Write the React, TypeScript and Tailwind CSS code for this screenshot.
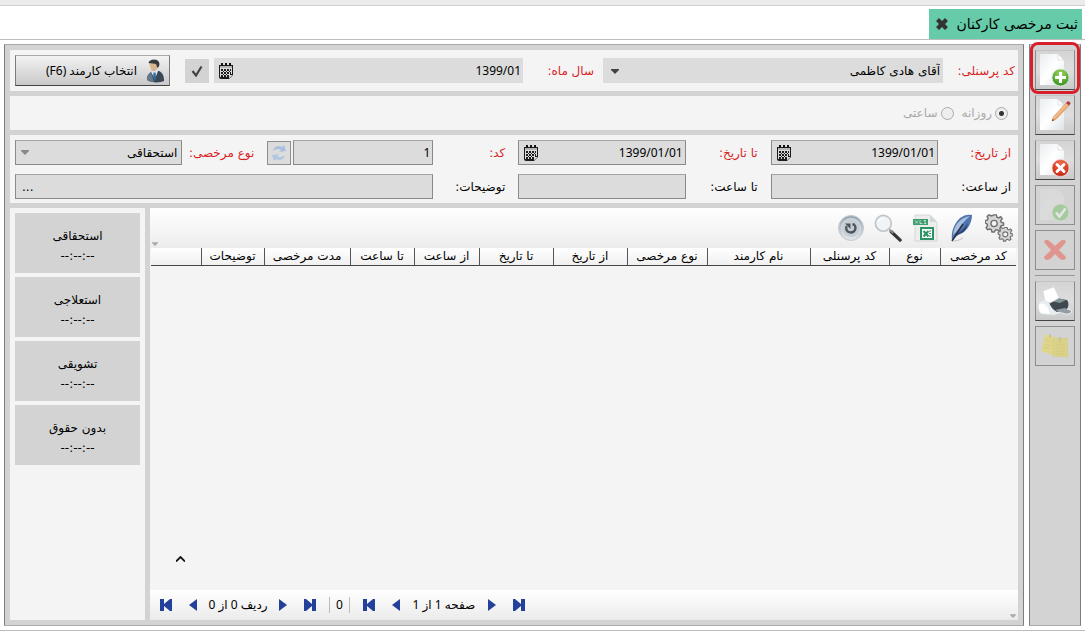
import React from "react";

type IconProps = { className?: string };

function Caret({ className = "" }: IconProps) {
  return (
    <svg viewBox="0 0 8 5" className={className} aria-hidden="true">
      <path d="M0 0h8v1L4 5 0 1z" fill="currentColor" />
    </svg>
  );
}

function CalendarIcon() {
  return (
    <svg viewBox="0 0 16 16" className="size-4 shrink-0" aria-hidden="true">
      <path d="M1 2h14v10l-4 4H3a2 2 0 0 1-2-2z" fill="#1c1c1c" />
      <path d="M2 3h12v2H2z" fill="#b4b4b4" />
      <g fill="#111">
        <path d="M3 0h2v3H3zM7 0h2v3H7zM11 0h2v3h-2z" />
      </g>
      <g fill="#dcdcdc">
        <path d="M2 5h12v1H2zM2 5h1v9H2zM5 6v8h1V6zM8 6v8h1V6zM11 6v5h1V6zM13 5h1v6h-1zM3 8h10v1H3zM3 11h9v1H3z" />
        <path d="M11 15.500V12h3.500z" />
      </g>
    </svg>
  );
}

function PageShape() {
  return (
    <>
      <defs>
        <linearGradient id="page" x1="0" y1="0" x2="1" y2="1">
          <stop offset="0" stopColor="#e9eef0" />
          <stop offset="0.5" stopColor="#fff" />
          <stop offset="1" stopColor="#dde3e7" />
        </linearGradient>
      </defs>
      <path d="M4 3h18l6 6v25H4z" fill="url(#page)" />
      <path d="M22 3l6 6h-6z" fill="#fff" stroke="#c9ced1" strokeWidth="0.6" />
    </>
  );
}

function NewIcon() {
  return (
    <svg viewBox="0 0 38 38" className="size-full" aria-hidden="true">
      <defs>
        <radialGradient id="green" cx="0.5" cy="0.25" r="0.8">
          <stop offset="0" stopColor="#9bd65c" />
          <stop offset="1" stopColor="#2f8d1d" />
        </radialGradient>
      </defs>
      <PageShape />
      <circle cx="24.500" cy="26.500" r="8.500" fill="url(#green)" stroke="#e4f2dc" strokeWidth="0.7" />
      <path d="M23 21h3v4h4v3h-4v4h-3v-4h-4v-3h4z" fill="#fff" />
    </svg>
  );
}

function EditIcon() {
  return (
    <svg viewBox="0 0 38 38" className="size-full" aria-hidden="true">
      <PageShape />
      <path d="M16 25l1.300-4L30 7l3 2.500L20 23.500z" fill="#efaa72" stroke="#c98e62" strokeWidth="0.5" />
      <path d="M18 22L31 8" stroke="#f9d0a5" strokeWidth="1" />
      <path d="M30 7l1.500-1.600c1-.8 3.600 1.200 2.900 2.300L33 9.500z" fill="#b8343c" />
      <path d="M16 25l.7-2 1.300 1.200z" fill="#333" />
    </svg>
  );
}

function DeletePageIcon() {
  return (
    <svg viewBox="0 0 38 38" className="size-full" aria-hidden="true">
      <defs>
        <radialGradient id="red" cx="0.5" cy="0.2" r="0.9">
          <stop offset="0" stopColor="#ef6a4a" />
          <stop offset="1" stopColor="#c41c0d" />
        </radialGradient>
      </defs>
      <PageShape />
      <circle cx="24.500" cy="27" r="8.500" fill="url(#red)" stroke="#f2dcd8" strokeWidth="0.7" />
      <path d="M21 23.500l7 7m0-7l-7 7" stroke="#fff" strokeWidth="3" strokeLinecap="round" />
    </svg>
  );
}

function ConfirmIcon() {
  return (
    <svg viewBox="0 0 38 38" className="size-full opacity-45" aria-hidden="true">
      <g opacity="0.45">
        <PageShape />
      </g>
      <circle cx="24.500" cy="26.500" r="8.500" fill="#6fc05c" stroke="#e4f2dc" strokeWidth="0.7" />
      <path d="M20 26.500l3.500 4 6-8" stroke="#fff" strokeWidth="2.600" fill="none" />
    </svg>
  );
}

function CrossIcon() {
  return (
    <svg viewBox="0 0 38 38" className="size-full" aria-hidden="true">
      <path
        d="M8 11q1-3 4-2 3 2 7 6 4-4 7-6 3-1 4 2-3 4-7 8 4 4 7 7 0 3-4 3-4-2-7-6-3 4-7 6-4 0-4-3 3-3 7-7-4-4-7-8z"
        fill="#df958d"
      />
    </svg>
  );
}

function PrinterIcon() {
  return (
    <svg viewBox="0 0 38 38" className="size-full" aria-hidden="true">
      <path d="M3 21q5-4 12-3l14-1 3 11-14 5-13-1q-4-5-2-11z" fill="#e8edf0" />
      <path d="M13 20l7-4 11 2q3 4 0 9l-10 3q-6-3-8-10z" fill="#3f4a50" />
      <path d="M15 19l6-3 9 2-6 3z" fill="#84929a" />
      <path d="M7 9l11-4 5 11-9 5-5-2z" fill="#fff" stroke="#d9dcde" strokeWidth="0.6" />
      <path d="M3 22q8-3 11 10l-9-1q-3-4-2-9z" fill="#fff" />
      <path d="M19 28l10-2 6 3q0 3-5 3z" fill="#929da4" />
      <path d="M26 31q8 3 10-2-1-2-5-2" stroke="#e9edef" fill="none" />
    </svg>
  );
}

function NotesIcon() {
  return (
    <svg viewBox="0 0 38 38" className="size-full opacity-75" aria-hidden="true">
      <path d="M9 7l12 4-4 17-12-4z" fill="#e3d873" />
      <path d="M17 12l14-1 1 19-15-1z" fill="#e0d26d" stroke="#d2c66d" strokeWidth="0.6" />
      <path d="M9 13l7 2m-8 2l7 2m-8 1l7 2M20 18h9m-9 3h9m-9 3h9m-9 3h9" stroke="#cfc46c" strokeWidth="0.8" />
      <path d="M14 7v4m10-1v5" stroke="#b5b69a" strokeWidth="1.300" />
    </svg>
  );
}

function RefreshIcon() {
  return (
    <svg viewBox="0 0 20 20" className="size-5" aria-hidden="true">
      <path d="M4 8c1-5 6-6 9-4l2-2 2 6-7 1 2-2C9 5 7 6 4 8z" fill="#a9bfdf" />
      <path d="M16 12c-1 5-6 6-9 4l-2 2-2-6 7-1-2 2c3 2 5 1 8-1z" fill="#b2c6e3" />
    </svg>
  );
}

function PersonIcon() {
  return (
    <svg viewBox="0 0 20 24" className="h-6 w-5 shrink-0" aria-hidden="true">
      <path d="M2 21c0-5 2-7 6-9l6 0c4 2 5 5 5 10-4 2-13 2-17-1z" fill="#3a4855" />
      <path d="M6 13l4 7 3-8-3-2z" fill="#dfe8ee" />
      <path d="M8.500 13.500h2l.6 5-1.200 3-1.600-3z" fill="#2c6da5" />
      <path d="M2 21c0-4 1-6 4-8l3 10c-3 0-5-1-7-2z" fill="#64798a" />
      <path d="M4 4c1-3 8-3 9 1l-1 5c-2 3-5 3-6 0z" fill="#d9b48e" />
      <path d="M3.500 4C4 0 12-1 14 3c1 3 0 5-1.500 6L11 5C9 5 7 4 3.500 4z" fill="#35393c" />
    </svg>
  );
}

function RestoreIcon() {
  return (
    <svg viewBox="0 0 28 28" className="size-7" aria-hidden="true">
      <defs>
        <linearGradient id="disc" x1="0" y1="0" x2="0" y2="1">
          <stop offset="0" stopColor="#96a3ae" />
          <stop offset="1" stopColor="#e2e7ea" />
        </linearGradient>
      </defs>
      <circle cx="14" cy="14" r="12.500" fill="url(#disc)" stroke="#c3cbd1" />
      <circle cx="14" cy="14" r="9.500" fill="#c6ced5" stroke="#dfe4e8" strokeWidth="0.8" />
      <path d="M15.500 10.500h1.500c3 3 1 8-3 8s-5.500-3-4.500-6.500" stroke="#4d5559" strokeWidth="2.300" fill="none" />
      <path d="M8 9.500h5.500V15z" fill="#4d5559" />
    </svg>
  );
}

function SearchIcon() {
  return (
    <svg viewBox="0 0 30 30" className="size-7" aria-hidden="true">
      <path d="M18.500 19L28 28" stroke="#33373a" strokeWidth="3.500" strokeLinecap="round" />
      <path d="M16.500 16.500l4 4" stroke="#8b9195" strokeWidth="2" />
      <circle cx="10" cy="10" r="8.500" fill="#f0f4f7" stroke="#bfc4c8" strokeWidth="1.800" />
      <path d="M4 10c0-4 3-6 7-6-3 1-5 3-7 6z" fill="#fff" />
    </svg>
  );
}

function ExcelIcon() {
  return (
    <svg viewBox="0 0 28 28" className="size-7" aria-hidden="true">
      <path d="M4 1h15l7 7v19H4z" fill="#eceeee" stroke="#c9cccc" strokeWidth="0.7" />
      <path d="M19 1v7h7z" fill="#d3d7d7" />
      <path d="M2 5h15v6H2z" fill="#3f9b70" />
      <path d="M4 6.500l3 3m0-3l-3 3M9 6v3.500h2.500M15 6.500h-2l2 3h-2" stroke="#d4eadf" strokeWidth="0.8" fill="none" />
      <path d="M9 13h14v13H9z" fill="#2c9464" />
      <path d="M11 15h10v9H11z" fill="#fff" />
      <path d="M12.500 17l5 5.500m0-5.500l-5 5.500" stroke="#2c9464" strokeWidth="2.200" />
      <path d="M18 17h2M18 19.500h2M18 22h2" stroke="#2c9464" />
    </svg>
  );
}

function QuillIcon() {
  return (
    <svg viewBox="0 0 28 28" className="size-7" aria-hidden="true">
      <path d="M4 26C3 17 6 10 12 4c4-3 8-4 12-3 0 6-3 13-8 17-4 2-7 3-11 8z" fill="#4f74ae" />
      <path d="M5 21C6 12 11 4 22 2c-5 4-9 9-12 14z" fill="#a9bfdd" />
      <path d="M8 19c3 1 8-4 12-10-1 5-3 8-6 10-2 1-4 1-7 3z" fill="#2b4676" />
      <path d="M4 27L15 10" stroke="#2b3342" strokeWidth="1.500" />
      <path d="M5 27c4 0 7-1 10-3" stroke="#c4c4c4" fill="none" />
    </svg>
  );
}

function Gear({ x, y, s }: { x: number; y: number; s: number }) {
  return (
    <g transform={`translate(${x} ${y}) scale(${s})`}>
      <path
        d="M-1.500-9h3l.7 2.600 1.800.8L6.300-7 8-4.800 6.300-2.600l.6 1.800L9.500 0v2.500l-2.800.7-.9 1.700 1 2.400-2.200 1.600-2.200-1.500-1.800.3L-.8 10h-2.600l-.6-2.400-1.700-1-2.600.8-1.500-2.200 1.500-2.200-.4-1.700L-11 0v-2.500l2.500-.8.8-1.700-1-2.400 2-1.700 2.400 1.300 1.500-.5z"
        fill="#d5d5d5"
        stroke="#707070"
        strokeWidth="1.600"
      />
      <circle cx="-1" cy="0.500" r="3.500" fill="#f3f3f3" stroke="#707070" strokeWidth="1.500" />
    </g>
  );
}

function GearsIcon() {
  return (
    <svg viewBox="0 0 28 28" className="size-7" aria-hidden="true">
      <Gear x={10} y={9} s={0.9} />
      <Gear x={21} y={20} s={0.72} />
    </svg>
  );
}

function ToolButton({ label, disabled = false, children }: { label: string; disabled?: boolean; children: React.ReactNode }) {
  return (
    <button
      type="button"
      aria-label={label}
      disabled={disabled}
      className={
        disabled
          ? "size-10 border border-[#8e8e8e] bg-[#d3d3d3]"
          : "size-10 border border-t-[#c2c2c2] border-x-[#8a8a8a] border-b-[#444] bg-linear-to-b from-[#d4d4d4] via-[#dedede] to-[#cacaca]"
      }
    >
      {children}
    </button>
  );
}

function Label({ htmlFor, required = false, className = "", children }: { htmlFor: string; required?: boolean; className?: string; children: React.ReactNode }) {
  return (
    <label htmlFor={htmlFor} className={`whitespace-nowrap ${required ? "text-[#d81e1e]" : "text-black"} ${className}`}>
      {children}
    </label>
  );
}

const latin = "font-['Noto_Sans','DejaVu_Sans',sans-serif]";
const box = "flex h-[25px] min-w-0 items-center bg-[#dcdcdc]";
const framed = "border border-t-[#a5a5a5] border-[#8a8a8a]";
const field = `h-full w-full min-w-0 bg-transparent px-[2px] text-xs outline-none ${latin}`;

function TextField({ id, value = "", calendar = false, flat = false, className = "" }: { id: string; value?: string; calendar?: boolean; flat?: boolean; className?: string }) {
  return (
    <div className={`${box} ${flat ? "" : framed} ${className}`}>
      <input id={id} defaultValue={value} readOnly className={field} />
      {calendar && (
        <button type="button" aria-label="تقویم" className="me-1 shrink-0">
          <CalendarIcon />
        </button>
      )}
    </div>
  );
}

function Arrow({ dir, bar = false, label }: { dir: "left" | "right"; bar?: boolean; label: string }) {
  return (
    <button type="button" aria-label={label} className="shrink-0 text-[#23409a]">
      <svg viewBox={bar ? "0 0 12 12" : "0 0 8 12"} className={bar ? "h-3 w-3" : "h-3 w-2"} aria-hidden="true">
        {bar ? (
          <path d={dir === "left" ? "M0 0h4v5l6-5h2v12h-2L4 7v5H0z" : "M12 0H8v5L2 0H0v12h2l6-5v5h4z"} fill="currentColor" />
        ) : (
          <path d={dir === "left" ? "M8 0v12L0 6z" : "M0 0v12l8-6z"} fill="currentColor" />
        )}
      </svg>
    </button>
  );
}

const columns = [
  { title: "کد مرخصی", width: "w-[76px]" },
  { title: "نوع", width: "w-[51px]" },
  { title: "کد پرسنلی", width: "w-[79px]" },
  { title: "نام کارمند", width: "w-[103px]" },
  { title: "نوع مرخصی", width: "w-[80px]" },
  { title: "از تاریخ", width: "w-[74px]" },
  { title: "تا تاریخ", width: "w-[74px]" },
  { title: "از ساعت", width: "w-[65px]" },
  { title: "تا ساعت", width: "w-[64px]" },
  { title: "مدت مرخصی", width: "w-[86px]" },
  { title: "توضیحات", width: "w-[63px]" },
  { title: "", width: "w-[50px]" },
];

const balances = ["استحقاقی", "استعلاجی", "تشویقی", "بدون حقوق"];

const gridTools = [
  { label: "تنظیمات", icon: <GearsIcon /> },
  { label: "ویرایش", icon: <QuillIcon /> },
  { label: "خروجی اکسل", icon: <ExcelIcon /> },
  { label: "جستجو", icon: <SearchIcon /> },
  { label: "بازنشانی", icon: <RestoreIcon /> },
];

export default function App() {
  return (
    <div dir="rtl" className="flex min-h-screen flex-col border-b border-[#bcbcbc] bg-white font-['DejaVu_Sans',sans-serif] text-xs text-black">
      <div className="h-[6px] border-b border-[#cfcfcf] bg-[#ebebeb]" />
      <header className="flex h-[34px] items-end border-b border-[#bcbcbc] ps-[3px]">
        <div className="flex h-[30px] items-center gap-2 bg-[#66cba8] ps-1 pe-[7px]">
          <h1 className="text-sm whitespace-nowrap">ثبت مرخصی کارکنان</h1>
          <button type="button" aria-label="بستن">
            <svg viewBox="0 0 12 12" className="size-3" aria-hidden="true">
              <path d="M0 3l3-3 3 3 3-3 3 3-3 3 3 3-3 3-3-3-3 3-3-3 3-3z" fill="#333" />
            </svg>
          </button>
        </div>
      </header>

      <div className="flex flex-1 gap-[5px] p-1">
        <aside className="relative flex w-[52px] shrink-0 flex-col items-center gap-[5px] border border-x-[#7d7d7d] border-y-[#aaa] bg-[#d3d3d3] pt-[5px]">
          <ToolButton label="جدید"><NewIcon /></ToolButton>
          <ToolButton label="ویرایش"><EditIcon /></ToolButton>
          <ToolButton label="حذف"><DeletePageIcon /></ToolButton>
          <ToolButton label="تایید" disabled><ConfirmIcon /></ToolButton>
          <ToolButton label="انصراف" disabled><CrossIcon /></ToolButton>
          <div className="w-10 border-t border-[#999]" />
          <ToolButton label="چاپ"><PrinterIcon /></ToolButton>
          <ToolButton label="یادداشت" disabled><NotesIcon /></ToolButton>
          <div className="pointer-events-none absolute inset-x-0 -top-[3px] h-[52px] rounded-lg border-3 border-[#d8202c]" />
        </aside>

        <main className="flex min-w-0 flex-1 flex-col gap-[5px] border border-x-[#7d7d7d] border-y-[#aaa] bg-[#d3d3d3] p-[5px]">
          <section className="grid h-[41px] shrink-0 grid-cols-[72px_11fr_80px_10fr_44px_155px] items-center bg-[#f4f4f4] ps-[3px] pe-[5px]">
            <Label htmlFor="employee" required>کد پرسنلی:</Label>
            <div className="relative h-[25px] min-w-0 bg-[#dcdcdc]">
              <select id="employee" className="h-full w-full appearance-none bg-transparent px-[3px] outline-none">
                <option>آقای هادی کاظمی</option>
              </select>
              <Caret className="pointer-events-none absolute end-2 top-[11px] h-[5px] w-2 text-[#444]" />
            </div>
            <Label htmlFor="month" required className="ps-[9px]">سال ماه:</Label>
            <TextField id="month" value="1399/01" calendar flat />
            <button type="button" aria-label="تایید ماه" className="ms-[5px] grid size-6 place-items-center bg-[#d3d3d3]">
              <svg viewBox="0 0 12 12" className="size-3" aria-hidden="true">
                <path d="M1.500 6L5 10.500 10.500 1.500" stroke="#444" strokeWidth="2.200" fill="none" />
              </svg>
            </button>
            <button type="button" className="flex h-[31px] items-center gap-2 border border-t-[#aaa] border-x-[#7a7a7a] border-b-[#444] bg-linear-to-b from-[#f3f3f3] to-[#c9c9c9] ps-1 whitespace-nowrap">
              <PersonIcon />
              <span className={latin}>انتخاب کارمند (F6)</span>
            </button>
          </section>

          <section className="flex h-[34px] shrink-0 items-center gap-1 bg-[#f4f4f4] ps-[10px] text-[#a9a9a9]">
            <label className="flex items-center gap-[3px]">
              <input type="radio" name="unit" disabled defaultChecked className="size-[13px] appearance-none rounded-full border border-[#aaa] bg-[radial-gradient(circle,#333_2px,#eee_3px)]" />
              روزانه
            </label>
            <label className="flex items-center gap-[3px]">
              <input type="radio" name="unit" disabled className="ms-1 size-[13px] appearance-none rounded-full border border-[#aaa] bg-[#eee]" />
              ساعتی
            </label>
          </section>

          <section className="grid h-[68px] shrink-0 grid-cols-[75px_1fr_85px_1fr_85px_2.5fr] content-start items-center gap-y-[9px] bg-[#f4f4f4] ps-[5px] pe-[5px] pt-[5px]">
            <Label htmlFor="from-date" required className="ps-[2px]">از تاریخ:</Label>
            <TextField id="from-date" value="1399/01/01" calendar />
            <Label htmlFor="to-date" required className="ps-[13px]">تا تاریخ:</Label>
            <TextField id="to-date" value="1399/01/01" calendar />
            <Label htmlFor="code" required className="ps-[13px]">کد:</Label>
            <div className="flex min-w-0 items-center">
              <TextField id="code" value="1" className="flex-1" />
              <button type="button" aria-label="بازخوانی" disabled className="ms-[2px] grid size-6 shrink-0 place-items-center border border-[#8e8e8e] bg-[#dcdcdc]">
                <RefreshIcon />
              </button>
              <Label htmlFor="kind" required className="w-[85px] shrink-0 ps-[13px]">نوع مرخصی:</Label>
              <div className={`relative h-[25px] w-2/5 shrink-0 bg-[#dcdcdc] ${framed}`}>
                <select id="kind" className="h-full w-full appearance-none bg-transparent px-1 outline-none">
                  <option>استحقاقی</option>
                </select>
                <Caret className="pointer-events-none absolute end-[5px] top-[9px] h-[5px] w-2 text-[#888]" />
              </div>
            </div>
            <Label htmlFor="from-time" className="ps-[2px]">از ساعت:</Label>
            <TextField id="from-time" />
            <Label htmlFor="to-time" className="ps-[13px]">تا ساعت:</Label>
            <TextField id="to-time" />
            <Label htmlFor="notes" className="ps-[13px]">توضیحات:</Label>
            <div className={`${box} ${framed}`}>
              <input id="notes" readOnly className={field} />
              <button type="button" aria-label="متن کامل" className="me-[6px]">...</button>
            </div>
          </section>

          <div className="flex min-h-0 flex-1 gap-[5px]">
            <section className="flex min-w-0 flex-1 flex-col bg-[#f4f4f4]">
              <div className="flex h-10 items-center gap-[9px] bg-linear-to-b from-white to-[#ececec] ps-[5px]">
                {gridTools.map((tool) => (
                  <button key={tool.label} type="button" aria-label={tool.label}>
                    {tool.icon}
                  </button>
                ))}
                <Caret className="ms-auto me-[2px] mb-[2px] h-1 w-[6px] self-end text-[#aaa]" />
              </div>
              <div className="px-[2px]">
                <table className="w-full table-fixed border-collapse">
                  <thead>
                    <tr className="border-b border-[#444] bg-linear-to-b from-white to-[#f0f0f0]">
                      {columns.map((column) => (
                        <th key={column.width + column.title} scope="col" className={`${column.width} border-e border-[#555] p-0 leading-[17px] font-normal whitespace-nowrap last:border-e-0`}>
                          {column.title}
                        </th>
                      ))}
                    </tr>
                  </thead>
                </table>
              </div>
              <div className="flex flex-1 items-end justify-end pe-[26px] pb-7">
                <svg viewBox="0 0 9 6" className="h-[6px] w-[9px]" aria-hidden="true">
                  <path d="M0 5.500L4.500 1 9 5.500" stroke="#111" strokeWidth="1.800" fill="none" />
                </svg>
              </div>
              <footer dir="ltr" className={`flex h-[30px] shrink-0 items-center bg-linear-to-b from-white to-[#ebebeb] ps-[10px] ${latin}`}>
                <div className="flex items-center gap-[17px]">
                  <Arrow dir="left" bar label="اولین ردیف" />
                  <Arrow dir="left" label="ردیف قبل" />
                  <span dir="rtl" className="-mx-[7px] w-[62px] text-center whitespace-nowrap">ردیف 0 از 0</span>
                  <Arrow dir="right" label="ردیف بعد" />
                  <Arrow dir="right" bar label="آخرین ردیف" />
                </div>
                <span className="mx-[13px] border-x border-[#bbb] px-[6px]">0</span>
                <div className="flex items-center gap-[17px]">
                  <Arrow dir="left" bar label="اولین صفحه" />
                  <Arrow dir="left" label="صفحه قبل" />
                  <span dir="rtl" className="-mx-[7px] w-[68px] text-center whitespace-nowrap">صفحه 1 از 1</span>
                  <Arrow dir="right" label="صفحه بعد" />
                  <Arrow dir="right" bar label="آخرین صفحه" />
                </div>
                <Caret className="ms-auto me-[2px] mb-[2px] h-1 w-[6px] self-end text-[#aaa]" />
              </footer>
            </section>

            <section className="flex w-[135px] shrink-0 flex-col gap-1 bg-[#f4f4f4] p-[5px]">
              {balances.map((name) => (
                <div key={name} className="flex h-[60px] flex-col items-center justify-center bg-[#d3d3d3] pt-[5px] leading-5">
                  <span>{name}</span>
                  <span dir="ltr">--:--:--</span>
                </div>
              ))}
            </section>
          </div>
        </main>
      </div>
    </div>
  );
}
